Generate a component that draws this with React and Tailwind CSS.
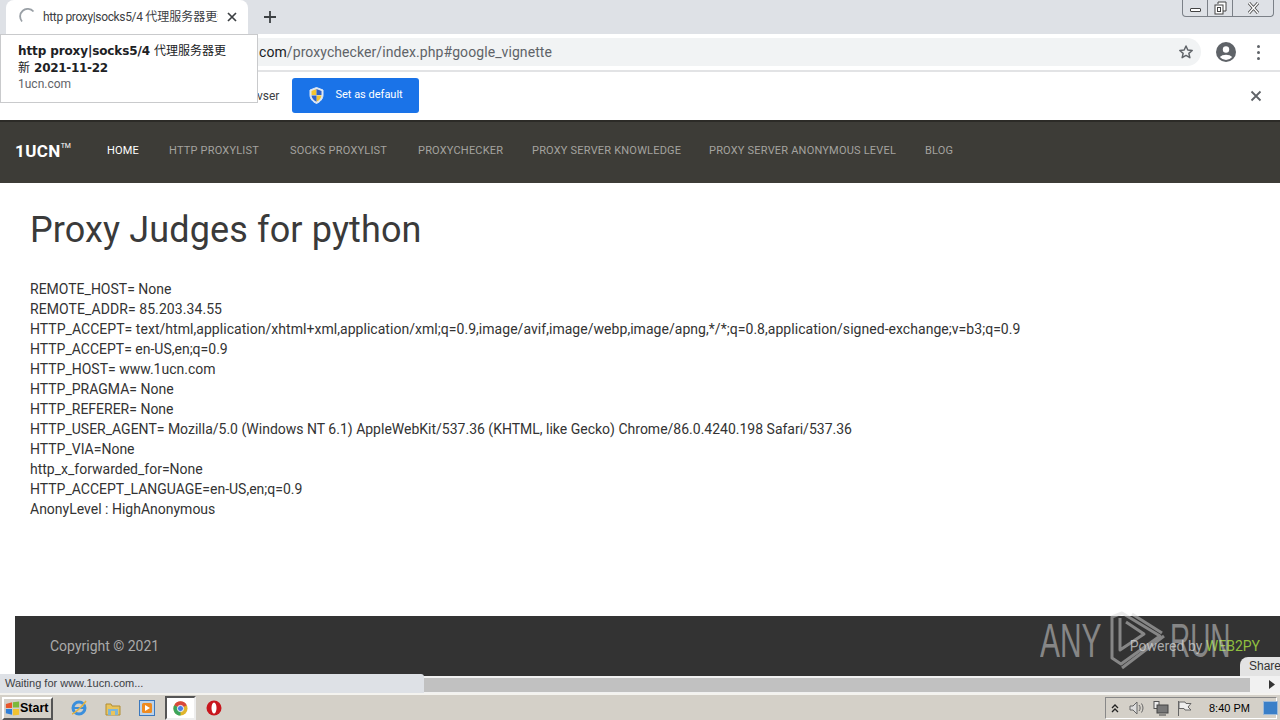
import React from "react";

const cjk = "font-['Roboto','Noto_Sans_CJK_SC',sans-serif]";
const lines = [
  ["REMOTE_HOST= None", ""],
  ["REMOTE_ADDR= 85.203.34.55", "tracking-[0.08px]"],
  ["HTTP_ACCEPT= text/html,application/xhtml+xml,application/xml;q=0.9,image/avif,image/webp,image/apng,*/*;q=0.8,application/signed-exchange;v=b3;q=0.9", "tracking-[0.04px]"],
  ["HTTP_ACCEPT= en-US,en;q=0.9", ""],
  ["HTTP_HOST= www.1ucn.com", ""],
  ["HTTP_PRAGMA= None", ""],
  ["HTTP_REFERER= None", ""],
  ["HTTP_USER_AGENT= Mozilla/5.0 (Windows NT 6.1) AppleWebKit/537.36 (KHTML, like Gecko) Chrome/86.0.4240.198 Safari/537.36", ""],
  ["HTTP_VIA=None", ""],
  ["http_x_forwarded_for=None", ""],
  ["HTTP_ACCEPT_LANGUAGE=en-US,en;q=0.9", ""],
  ["AnonyLevel : HighAnonymous", ""],
];
const nav = [
  ["HTTP PROXYLIST", "w-[121px]"],
  ["SOCKS PROXYLIST", "w-[128px]"],
  ["PROXYCHECKER", "w-[114px]"],
  ["PROXY SERVER KNOWLEDGE", "w-[177px]"],
  ["PROXY SERVER ANONYMOUS LEVEL", "w-[216px]"],
  ["BLOG", "w-[40px]"],
];

function TabStrip() {
  return (
    <div className="h-[34px] shrink-0 bg-[#dee1e6] flex items-end relative">
      <div className={`${cjk} ml-[6px] w-[242px] h-[34px] bg-white rounded-t-lg flex items-center pl-[13px] pr-[10px] text-[12px] text-[#3c4043]`}>
        <svg width="18" height="18" viewBox="0 0 18 18" className="shrink-0">
          <path d="M3 13.5A7.3 7.3 0 0 1 14.5 3.5" fill="none" stroke="#9aa0a6" strokeWidth="1.8" />
        </svg>
        <span className="ml-[6px] w-[175px] overflow-hidden whitespace-nowrap">
          <span className="tracking-[-0.35px]">http proxy|socks5/4 </span>代理服务器更新 2021-11-22
        </span>
        <svg width="12" height="12" viewBox="0 0 12 12" className="ml-auto shrink-0">
          <path d="M2 2l8 8M10 2l-8 8" stroke="#3c4043" strokeWidth="1.7" />
        </svg>
      </div>
      <svg width="14" height="14" viewBox="0 0 14 14" className="ml-[15px] mb-[10px]">
        <path d="M7 1v12M1 7h12" stroke="#3c4043" strokeWidth="1.8" />
      </svg>
      <div className="ml-auto mr-[6px] self-start h-[17px] w-[92px] border border-t-0 border-[#7b8087] rounded-b-[4px] flex bg-[#dee1e6]">
        <div className="w-[25px] border-r border-[#7b8087] flex items-center justify-center">
          <div className="w-[11px] h-[4px] mt-[3px] border border-[#444] bg-white rounded-[1px]" />
        </div>
        <div className="w-[25px] border-r border-[#7b8087] flex items-center justify-center">
          <svg width="13" height="14" viewBox="0 0 13 14">
            <path d="M4 3V1h8v9h-3" fill="#fff" stroke="#444" />
            <rect x="1" y="4" width="8" height="9" fill="#fff" stroke="#444" />
            <rect x="3.5" y="6.5" width="3" height="4" fill="none" stroke="#444" />
          </svg>
        </div>
        <div className="flex-1 flex items-center justify-center">
          <svg width="13" height="12" viewBox="0 0 13 12">
            <path d="M2 1l9 10M11 1L2 11" stroke="#444" strokeWidth="3" />
            <path d="M2 1l9 10M11 1L2 11" stroke="#fff" strokeWidth="1.4" />
          </svg>
        </div>
      </div>
    </div>
  );
}

function Toolbar() {
  return (
    <div className="h-[38px] shrink-0 bg-white border-b-2 border-[#e2e3e5] flex items-center">
      <div className="ml-[100px] w-[1101px] h-[28px] bg-[#f1f3f4] rounded-r-full flex items-center pl-[159px] pr-[7px]">
        <span className="font-['Roboto',sans-serif] text-[14px] tracking-[0.08px] text-[#5f6368] whitespace-nowrap">
          <span className="text-[#202124]">com</span>/proxychecker/index.php#google_vignette
        </span>
        <svg width="16" height="16" viewBox="0 0 24 24" className="ml-auto">
          <path d="M12 3l2.7 6.1 6.6.6-5 4.4 1.5 6.5L12 17.2 6.200 20.600l1.500-6.500-5-4.400 6.600-.6z" fill="none" stroke="#5f6368" strokeWidth="2.2" strokeLinejoin="round" />
        </svg>
      </div>
      <svg width="20" height="20" viewBox="0 0 20 20" className="ml-[15px]">
        <circle cx="10" cy="10" r="10" fill="#5f6368" />
        <circle cx="10" cy="7.500" r="3.200" fill="#fff" />
        <path d="M3.800 15a7.500 5 0 0 1 12.400 0A8 8 0 0 1 3.800 15z" fill="#fff" />
      </svg>
      <div className="ml-[21px] flex flex-col gap-[3px]">
        <span className="w-[3px] h-[3px] rounded-full bg-[#5f6368]" />
        <span className="w-[3px] h-[3px] rounded-full bg-[#5f6368]" />
        <span className="w-[3px] h-[3px] rounded-full bg-[#5f6368]" />
      </div>
    </div>
  );
}

function Infobar() {
  return (
    <div className="h-[48px] shrink-0 bg-white flex items-center pb-[1px] font-['Roboto',sans-serif]">
      <span className="ml-[257px] text-[12px] text-[#3c4043]">vser</span>
      <div className="ml-[13px] w-[127px] h-[35px] bg-[#1a73e8] rounded-[3px] flex items-center pl-[17px] text-white text-[11px]">
        <svg width="15" height="17" viewBox="0 0 15 17">
          <path d="M7.500 .5L14 3v5c0 4-3 7-6.500 8.500C4 15 1 12 1 8V3z" fill="#dfe8f4" stroke="#dfe8f4" strokeWidth="1" />
          <path d="M7.500 2L2.500 4v4h5zM7.500 8.500h5c-.3 3-2.500 5-5 6.300z" fill="#f4c430" />
          <path d="M7.500 2l5 2v4h-5zM7.500 8.500h-5c.3 3 2.500 5 5 6.300z" fill="#2f62c9" />
        </svg>
        <span className="ml-[11px]">Set as default</span>
      </div>
      <svg width="12" height="12" viewBox="0 0 12 12" className="ml-auto mr-[18px]">
        <path d="M1.500 1.500l9 9M10.500 1.500l-9 9" stroke="#5f6368" strokeWidth="1.800" />
      </svg>
    </div>
  );
}

function SiteNav() {
  return (
    <div className="h-[63px] shrink-0 bg-[#3d3c37] border-t-2 border-[#2c2b27] flex items-center pb-[2px] font-['Roboto',sans-serif]">
      <div className="ml-[15px] w-[92px] flex items-start text-white font-bold text-[17px] tracking-[0.4px] leading-none">
        1UCN<span className="text-[7px] leading-none font-normal tracking-normal">TM</span>
      </div>
      <div className="w-[62px] text-[11px] tracking-[0.2px] text-white">HOME</div>
      {nav.map(([t, w]) => (
        <div key={t} className={`${w} text-[11px] tracking-[0.2px] text-[#a4a39f] whitespace-nowrap`}>{t}</div>
      ))}
    </div>
  );
}

function Footer() {
  return (
    <div className="ml-[15px] h-[60px] shrink-0 bg-[#333333] flex items-center pl-[35px] pr-[20px] font-['Roboto',sans-serif] text-[14px] text-[#aaaaaa]">
      <span>Copyright © 2021</span>
      <span className="ml-auto">Powered by <span className="text-[#8fbf3f]">WEB2PY</span></span>
    </div>
  );
}

function Scrollbar() {
  return (
    <div className="h-[17px] shrink-0 bg-[#f1f1f1] flex items-center">
      <div className="w-[1250px] h-[14px] bg-[#c1c1c1]" />
      <svg width="6" height="9" viewBox="0 0 6 9" className="ml-[19px]"><path d="M0 0l6 4.500L0 9z" fill="#333" /></svg>
    </div>
  );
}

function Taskbar() {
  return (
    <div className="h-[27px] shrink-0 bg-[#d4d0c8] flex items-center pl-[2px] pb-[1px] font-['Liberation_Sans',sans-serif]">
      <div className="w-[51px] h-[23px] flex items-center pl-[1px] border-2 border-t-white border-l-white border-r-[#555] border-b-[#555] font-bold text-[12.500px] text-black">
        <svg width="15" height="15" viewBox="0 0 17 16" className="shrink-0">
          <path d="M1 3l7-2v6.500H1z" fill="#e8562a" />
          <path d="M9 1l7-1v7H9z" fill="#7cb93a" />
          <path d="M1 8.500h7V15l-7-1.500z" fill="#2f7fd8" />
          <path d="M9 8.500h7V15l-7 1z" fill="#f2c230" />
        </svg>
        Start
      </div>
      <svg width="18" height="18" viewBox="0 0 18 18" className="ml-[17px]">
        <circle cx="9" cy="9" r="6" fill="none" stroke="#3b8fdc" strokeWidth="3" />
        <path d="M4 9h10" stroke="#3b8fdc" strokeWidth="2" />
        <path d="M2 15C5 14 13 7 16 2" fill="none" stroke="#e3b341" strokeWidth="1.500" />
      </svg>
      <svg width="16" height="15" viewBox="0 0 16 15" className="ml-[17px]">
        <path d="M1 3h5l1 2h8v9H1z" fill="#e9c45c" stroke="#b08d35" />
        <rect x="3" y="8" width="10" height="6" fill="#7fb6d6" />
        <rect x="6" y="10" width="4" height="4" fill="#e9c45c" />
      </svg>
      <svg width="16" height="16" viewBox="0 0 16 16" className="ml-[18px]">
        <rect x=".5" y=".5" width="15" height="15" fill="#bcd3ea" stroke="#3b78bd" />
        <rect x="3" y="3" width="10" height="10" rx="1.500" fill="#ef8b1f" />
        <path d="M6 5l5 3-5 3z" fill="#fff" />
      </svg>
      <div className="ml-[10px] w-[31px] h-[24px] bg-white border-2 border-t-[#555] border-l-[#555] border-r-[#eee] border-b-[#eee] flex items-center justify-center">
        <svg width="15" height="15" viewBox="0 0 16 16">
          <circle cx="8" cy="8" r="7.500" fill="#e0b52d" />
          <path d="M8 8L1.300 4.500A7.500 7.500 0 0 1 14.700 4.500z" fill="#d9483b" />
          <path d="M8 8L8 15.500A7.500 7.500 0 0 1 1.300 4.500z" fill="#3ca55c" />
          <circle cx="8" cy="8" r="3.300" fill="#4a80e8" stroke="#fff" />
        </svg>
      </div>
      <svg width="16" height="16" viewBox="0 0 16 16" className="ml-[10px]">
        <circle cx="8" cy="8" r="7.500" fill="#c8161d" />
        <ellipse cx="8" cy="8" rx="2.500" ry="5.500" fill="#fff" />
      </svg>
      <div className="ml-auto mr-[3px] w-[172px] h-[22px] border border-t-[#888] border-l-[#888] border-r-white border-b-white flex items-center text-[11px] text-black">
        <svg width="8" height="9" viewBox="0 0 8 9" className="ml-[5px] shrink-0">
          <path d="M1 4l3-3 3 3M1 8l3-3 3 3" fill="none" stroke="#222" strokeWidth="1.300" />
        </svg>
        <svg width="16" height="14" viewBox="0 0 16 14" className="ml-[10px] shrink-0">
          <path d="M1 5h3l4-4v12L4 9H1z" fill="#ddd" stroke="#666" />
          <path d="M10 4c1.500 2 1.500 4 0 6M12.500 2.500c2 3 2 6 0 9" fill="none" stroke="#666" />
        </svg>
        <svg width="16" height="15" viewBox="0 0 16 15" className="ml-[8px] shrink-0">
          <rect x="1" y=".5" width="5" height="7" fill="#eee" stroke="#555" />
          <rect x="4" y="4" width="11" height="8" fill="#777" stroke="#444" />
          <path d="M6 14h7" stroke="#444" />
        </svg>
        <svg width="15" height="15" viewBox="0 0 15 15" className="ml-[8px] shrink-0">
          <path d="M1.500 0v15" stroke="#666" />
          <path d="M2 1h6l1 1.500h5L11 6l3 3H8L7 7.500H2z" fill="#eee" stroke="#666" />
        </svg>
        <span className="ml-[17px] whitespace-nowrap">8:40 PM</span>
        <div className="ml-[13px] w-[15px] h-[14px] shrink-0 bg-[#3a7fc8] border border-[#9cb9d8]" />
      </div>
    </div>
  );
}

export default function App() {
  return (
    <div className="relative w-[1280px] h-[720px] overflow-hidden bg-white flex flex-col">
      <TabStrip />
      <Toolbar />
      <Infobar />
      <SiteNav />
      <main className="h-[433px] shrink-0 bg-white pl-[30px] font-['Roboto',sans-serif] text-[#333333]">
        <h1 className="pt-[27px] text-[36px] leading-[40px] font-normal tracking-[0.13px] text-[#3a3a3a]">Proxy Judges for python</h1>
        <div className="mt-[29px] text-[14px] leading-[20px]">
          {lines.map(([l, c], i) => <div key={i} className={`whitespace-nowrap ${c}`}>{l}</div>)}
        </div>
      </main>
      <Footer />
      <Scrollbar />
      <div className="h-[2px] shrink-0 bg-[#f4f3ef]" />
      <Taskbar />

      <div className="absolute left-0 top-[34px] w-[258px] h-[69px] bg-white border border-[#c9cacc] pl-[17px] pt-[8px] text-[#202124]">
        <div className="w-[212px] font-['DejaVu_Sans','Noto_Sans_CJK_SC',sans-serif] font-bold text-[12px] leading-[17px] tracking-[-0.12px]">
          http proxy|socks5/4 <span className="font-normal tracking-normal">代理服务器更新</span> <span className="tracking-[-0.3px]">2021-11-22</span>
        </div>
        <div className="font-['Roboto',sans-serif] text-[12px] text-[#5f6368] leading-[15px]">1ucn.com</div>
      </div>

      <div className="absolute left-0 top-[674px] w-[424px] h-[19px] bg-[#dee1e6] rounded-tr-[3px] pl-[5px] font-['Liberation_Sans',sans-serif] text-[11px] leading-[18px] text-[#3c4043]">
        Waiting for www.1ucn.com...
      </div>

      <div className="absolute right-0 top-[657px] w-[40px] h-[19px] bg-[#e3e3e3] rounded-tl-[8px] pl-[9px] font-['Liberation_Sans',sans-serif] text-[12px] leading-[19px] text-[#333]">
        Share
      </div>

      <div className="absolute left-[1040px] top-[600px] w-[200px] h-[80px] opacity-50 pointer-events-none font-['Liberation_Sans',sans-serif] text-[49px] leading-[80px] text-[#d8d8d8]">
        <span className="absolute left-0 top-0 inline-block scale-x-[0.61] origin-left">ANY</span>
        <svg width="80" height="80" viewBox="0 0 80 80" className="absolute left-[60px] top-0">
          <path d="M12 17V58L21 64 60 36 22 13 12 17z" fill="none" stroke="#d8d8d8" strokeWidth="3" strokeLinejoin="round" />
          <path d="M20 18V50L44 34 26 22" fill="none" stroke="#d8d8d8" strokeWidth="3" strokeLinejoin="round" />
          <path d="M32 14L62 33" fill="none" stroke="#d8d8d8" strokeWidth="3" />
          <path d="M64 36L22 68" fill="none" stroke="#d8d8d8" strokeWidth="3" />
        </svg>
        <span className="absolute left-[130px] top-0 inline-block scale-x-[0.57] origin-left">RUN</span>
      </div>
    </div>
  );
}
